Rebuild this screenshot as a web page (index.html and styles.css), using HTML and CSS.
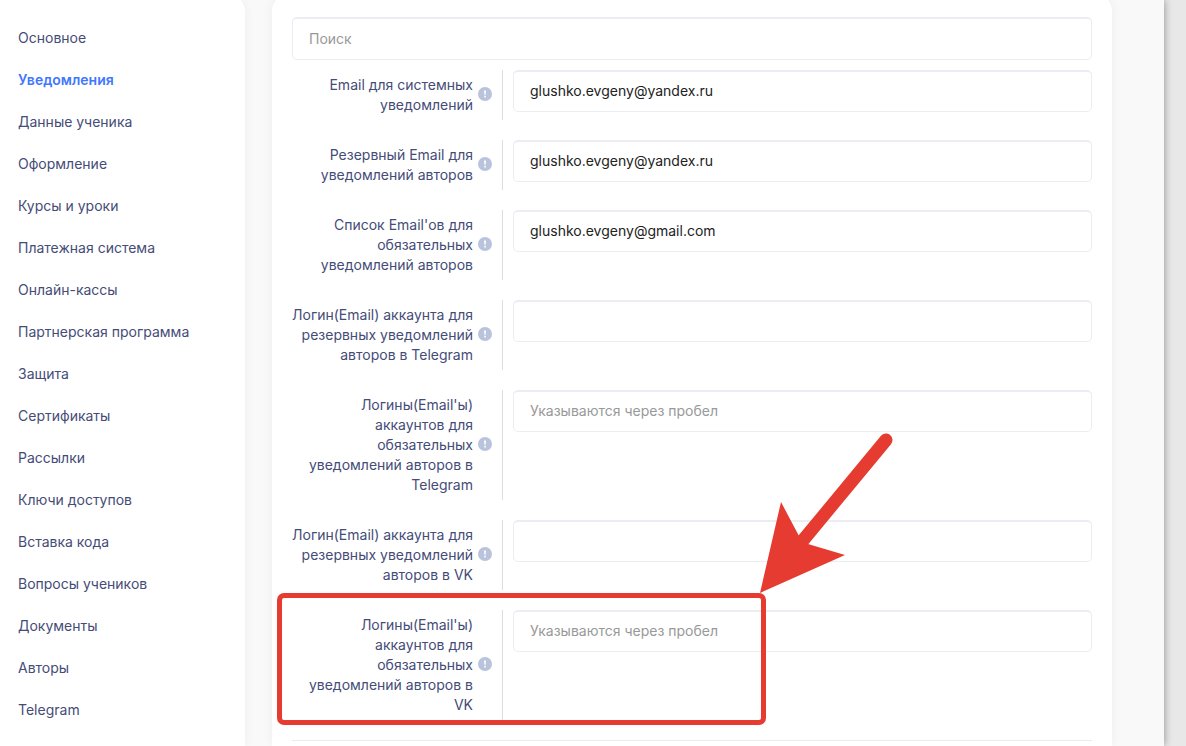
FILE: index.html
```
<!DOCTYPE html>
<html lang="ru">
<head>
    <meta charset="UTF-8">
    <meta name="viewport" content="width=device-width, initial-scale=1.0">
    <title>Настройки — Уведомления</title>
    <link rel="stylesheet" href="styles.css">
</head>
<body>
    <div class="page">
        <nav class="sidebar">
            <a class="menu-link" href="#">Основное</a>
            <a class="menu-link active" href="#">Уведомления</a>
            <a class="menu-link" href="#">Данные ученика</a>
            <a class="menu-link" href="#">Оформление</a>
            <a class="menu-link" href="#">Курсы и уроки</a>
            <a class="menu-link" href="#">Платежная система</a>
            <a class="menu-link" href="#">Онлайн-кассы</a>
            <a class="menu-link" href="#">Партнерская программа</a>
            <a class="menu-link" href="#">Защита</a>
            <a class="menu-link" href="#">Сертификаты</a>
            <a class="menu-link" href="#">Рассылки</a>
            <a class="menu-link" href="#">Ключи доступов</a>
            <a class="menu-link" href="#">Вставка кода</a>
            <a class="menu-link" href="#">Вопросы учеников</a>
            <a class="menu-link" href="#">Документы</a>
            <a class="menu-link" href="#">Авторы</a>
            <a class="menu-link" href="#">Telegram</a>
        </nav>
        <main class="card">
            <input class="field search" type="search" placeholder="Поиск" aria-label="Поиск">
            <form class="settings">
                <div class="row">
                    <div class="row-label">
                        <label for="systemEmail">Email для системных уведомлений</label>
                        <svg class="hint" viewBox="0 0 14 14"><circle cx="7" cy="7" r="7"/><path d="M6 3.5h2l-.4 4.2H6.4zM6.2 8.8h1.6v1.6H6.2z"/></svg>
                    </div>
                    <input class="field" id="systemEmail" type="text" value="glushko.evgeny@yandex.ru">
                </div>
                <div class="row">
                    <div class="row-label">
                        <label for="reserveEmail">Резервный Email для уведомлений авторов</label>
                        <svg class="hint" viewBox="0 0 14 14"><circle cx="7" cy="7" r="7"/><path d="M6 3.5h2l-.4 4.2H6.4zM6.2 8.8h1.6v1.6H6.2z"/></svg>
                    </div>
                    <input class="field" id="reserveEmail" type="text" value="glushko.evgeny@yandex.ru">
                </div>
                <div class="row">
                    <div class="row-label">
                        <label for="emailList">Список Email'ов для обязательных уведомлений авторов</label>
                        <svg class="hint" viewBox="0 0 14 14"><circle cx="7" cy="7" r="7"/><path d="M6 3.5h2l-.4 4.2H6.4zM6.2 8.8h1.6v1.6H6.2z"/></svg>
                    </div>
                    <input class="field" id="emailList" type="text" value="glushko.evgeny@gmail.com">
                </div>
                <div class="row">
                    <div class="row-label">
                        <label for="telegramReserve">Логин(Email) аккаунта для резервных уведомлений авторов в Telegram</label>
                        <svg class="hint" viewBox="0 0 14 14"><circle cx="7" cy="7" r="7"/><path d="M6 3.5h2l-.4 4.2H6.4zM6.2 8.8h1.6v1.6H6.2z"/></svg>
                    </div>
                    <input class="field" id="telegramReserve" type="text">
                </div>
                <div class="row">
                    <div class="row-label">
                        <label for="telegramRequired">Логины(Email'ы) аккаунтов для обязательных уведомлений авторов в Telegram</label>
                        <svg class="hint" viewBox="0 0 14 14"><circle cx="7" cy="7" r="7"/><path d="M6 3.5h2l-.4 4.2H6.4zM6.2 8.8h1.6v1.6H6.2z"/></svg>
                    </div>
                    <input class="field" id="telegramRequired" type="text" placeholder="Указываются через пробел">
                </div>
                <div class="row">
                    <div class="row-label">
                        <label for="vkReserve">Логин(Email) аккаунта для резервных уведомлений авторов в VK</label>
                        <svg class="hint" viewBox="0 0 14 14"><circle cx="7" cy="7" r="7"/><path d="M6 3.5h2l-.4 4.2H6.4zM6.2 8.8h1.6v1.6H6.2z"/></svg>
                    </div>
                    <input class="field" id="vkReserve" type="text">
                </div>
                <div class="row">
                    <div class="row-label">
                        <label for="vkRequired">Логины(Email'ы) аккаунтов для обязательных уведомлений авторов в VK</label>
                        <svg class="hint" viewBox="0 0 14 14"><circle cx="7" cy="7" r="7"/><path d="M6 3.5h2l-.4 4.2H6.4zM6.2 8.8h1.6v1.6H6.2z"/></svg>
                    </div>
                    <input class="field" id="vkRequired" type="text" placeholder="Указываются через пробел">
                    <div class="highlight"></div>
                    <svg class="arrow" viewBox="0 0 140 170">
                        <path class="arrow-line" d="M126 20L35 130"/>
                        <path class="arrow-head" d="M0 173L21 82L39 116L48 124L85 135Z"/>
                    </svg>
                </div>
            </form>
            <hr class="divider">
        </main>
    </div>
</body>
</html>
```

FILE: styles.css
```
* {
    box-sizing: border-box;
}

body {
    margin: 0;
    min-height: 100vh;
    background: #e8e8e8;
    font-family: Inter, "Open Sans", sans-serif;
    font-size: 14px;
    line-height: 20px;
    color: #454c77;
    overflow-x: hidden;
}

.page {
    display: flex;
    align-items: stretch;
    gap: 27px;
    min-height: 100vh;
    margin-right: 22px;
    padding-right: 52px;
    background: #f9f9f9;
    box-shadow: 0 0 8px rgba(0, 0, 0, 0.4);
}

/* cards start slightly above the scrolled viewport */
.sidebar,
.card {
    margin-top: -5px;
    background: #fff;
    box-shadow: 0 0 12px rgba(0, 0, 0, 0.05);
}

.sidebar {
    display: flex;
    flex-direction: column;
    flex: 0 0 245px;
    gap: 22px;
    padding: 33px 18px 0;
    border-radius: 0 16px 0 0;
}

.menu-link {
    color: inherit;
    text-decoration: none;
}

.menu-link.active {
    color: #3f77ff;
    font-weight: 600;
}

.card {
    flex: 1;
    min-width: 0;
    padding: 22px 20px 0;
    border-radius: 16px 16px 0 0;
}

.field {
    display: block;
    width: 100%;
    height: 42px;
    padding: 0 16px 2px;
    border: 1px solid #ebedf2;
    border-top-width: 2px;
    border-radius: 5px;
    background: #fff;
    font: inherit;
    color: #222;
    outline: none;
}

.field::placeholder {
    color: #999;
    opacity: 1;
}

.search {
    height: 43px;
    margin-bottom: 10px;
    appearance: none;
}

.settings {
    display: flex;
    flex-direction: column;
    gap: 20px;
}

.row {
    position: relative;
    display: flex;
    align-items: flex-start;
    gap: 10px;
}

.row-label {
    display: flex;
    align-items: center;
    justify-content: flex-end;
    flex: 0 0 211px;
    gap: 5px;
    padding: 5px 10px 5px 0;
    border-right: 1px solid #ddd;
    text-align: right;
}

.hint {
    flex: none;
    width: 14px;
    height: 14px;
    margin-bottom: 2px;
}

.hint circle {
    fill: #b9c3dc;
}

.hint path {
    fill: #fff;
}

.highlight {
    position: absolute;
    top: -17px;
    left: -15px;
    width: 489px;
    height: 132px;
    border: 5px solid #e63b31;
    border-radius: 7px;
}

.arrow {
    position: absolute;
    top: -190px;
    left: 468px;
    width: 140px;
    height: 170px;
    overflow: visible;
}

.arrow-line {
    fill: none;
    stroke: #e63b31;
    stroke-width: 13;
    stroke-linecap: round;
}

.arrow-head {
    fill: #e63b31;
}

.divider {
    height: 1px;
    margin: 20px 0 0;
    border: 0;
    background: #ebebeb;
}
```
